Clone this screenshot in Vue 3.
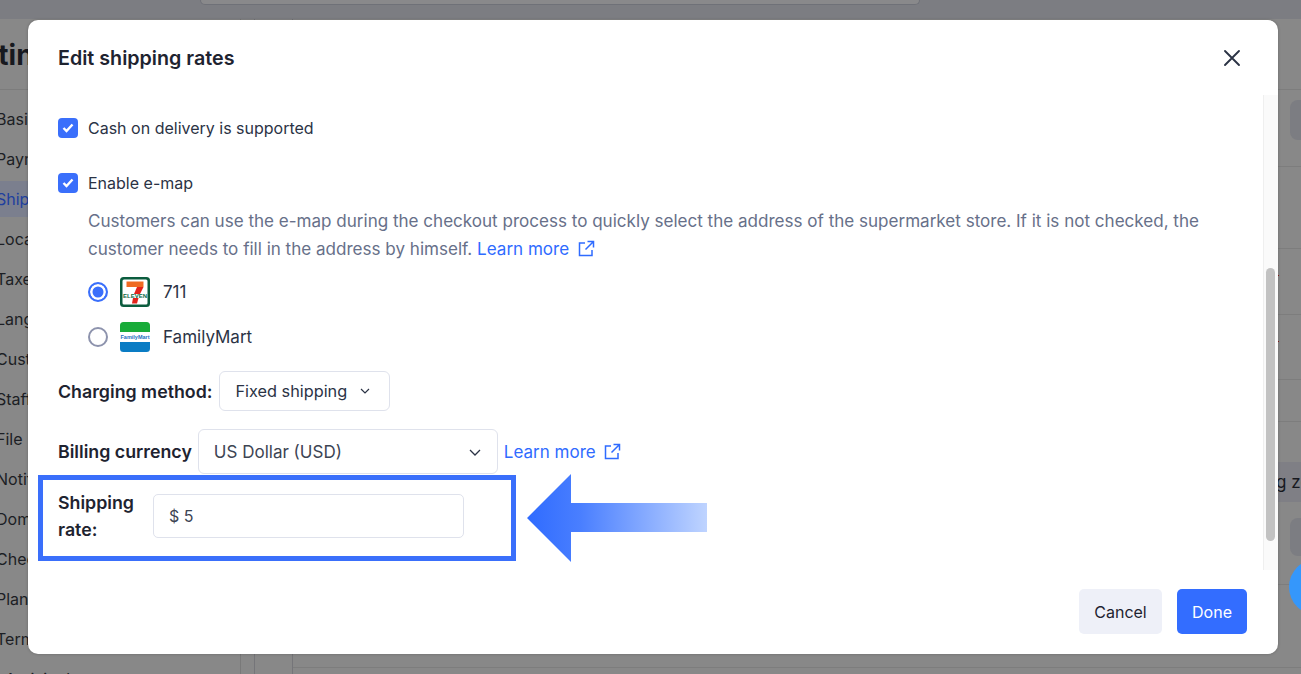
<template>
  <div class="page">
    <!-- dimmed settings page behind the dialog -->
    <div class="backdrop">
      <div class="topbar">
        <div class="search"></div>
      </div>
      <div class="content">
        <aside class="sidebar">
          <h1 class="page-title">Settings</h1>
          <ul class="menu">
            <li v-for="item in menu" :key="item" :class="{ active: item === 'Shipping', log: item === 'Activity log' }">{{ item }}</li>
          </ul>
        </aside>
        <div class="rail"></div>
        <main class="main">
          <div class="row" style="height: 71px"></div>
          <div class="row box-row" style="height: 77px"><div class="grey-box"></div></div>
          <div class="row" style="height: 82px"></div>
          <div class="row dot-row" style="height: 66px"><span class="dot"></span></div>
          <div class="row dot-row" style="height: 65px"><span class="dot"></span></div>
          <div class="row" style="height: 42px"></div>
          <div class="plain" style="height: 40px"></div>
          <div class="zone-tag">Shipping zone</div>
          <div class="row low-box" style="height: 83px"><div class="grey-box tall"></div></div>
          <div class="row" style="height: 83px"></div>
        </main>
      </div>
      <div class="chat-bubble"></div>
    </div>

    <div class="modal">
      <div class="modal-header">
        <h2>Edit shipping rates</h2>
        <button class="close">
          <svg width="20" height="20" viewBox="0 0 20 20" fill="none" stroke="#2b3345" stroke-width="1.9" stroke-linecap="round">
            <path d="M3 3l14 14M17 3L3 17" />
          </svg>
        </button>
      </div>

      <div class="modal-scroll">
        <div class="modal-body">
          <label class="check first">
            <span class="box"><svg width="12" height="10" viewBox="0 0 12 10" fill="none" stroke="#fff" stroke-width="2.4"><path d="M1.5 5l3 3 6-6.5" /></svg></span>
            Cash on delivery is supported
          </label>
          <label class="check second">
            <span class="box"><svg width="12" height="10" viewBox="0 0 12 10" fill="none" stroke="#fff" stroke-width="2.4"><path d="M1.5 5l3 3 6-6.5" /></svg></span>
            Enable e-map
          </label>
          <p class="hint">
            Customers can use the e-map during the checkout process to quickly select the address of the supermarket store. If it is not checked, the customer needs to fill in the address by himself.
            <a class="link">Learn more
              <svg class="ext" width="18" height="18" viewBox="0 0 18 18" fill="none" stroke="#2f6bff" stroke-width="1.5"><path d="M8 3H2.500v12.500h12.500V10M10.500 1.500h6v6M16 2L8.500 9.500" /></svg>
            </a>
          </p>

          <div class="radio-row top">
            <span class="radio on"></span>
            <svg class="logo" width="30" height="30" viewBox="0 0 30 30">
              <rect width="30" height="30" rx="3.500" fill="#0b5c3e" />
              <rect x="2.500" y="2.500" width="25" height="25" rx="1.500" fill="#fff" />
              <path d="M6.500 4.500h17v5.500h-17z" fill="#ef6a22" />
              <path d="M17 10h6.500l-3.500 7h-6z" fill="#e2231a" />
              <path d="M13 21h5.500l-1.500 5.500h-5z" fill="#e2231a" />
              <text x="15" y="20.700" text-anchor="middle" class="eleven">ELEVEN</text>
            </svg>
            <span>711</span>
          </div>
          <div class="radio-row">
            <span class="radio"></span>
            <svg class="logo" width="30" height="30" viewBox="0 0 30 30">
              <rect width="30" height="30" rx="3.500" fill="#fff" />
              <path d="M0 10V3.500A3.500 3.500 0 0 1 3.500 0h23A3.500 3.500 0 0 1 30 3.500V10z" fill="#18ab39" />
              <path d="M0 20h30v6.500a3.500 3.500 0 0 1-3.500 3.500h-23A3.500 3.500 0 0 1 0 26.500z" fill="#0a7cc4" />
              <text x="15" y="17" text-anchor="middle" class="fmart">FamilyMart</text>
            </svg>
            <span>FamilyMart</span>
          </div>

          <div class="field-row charging">
            <span class="field-label">Charging method:</span>
            <div class="select small">
              <span>Fixed shipping</span>
              <svg width="12" height="12" viewBox="0 0 12 12" fill="none" stroke="#2b3345" stroke-width="1.2"><path d="M2 4l4 4 4-4" /></svg>
            </div>
          </div>

          <div class="field-row billing">
            <span class="field-label">Billing currency</span>
            <div class="select wide">
              <span>US Dollar (USD)</span>
              <svg width="14" height="14" viewBox="0 0 14 14" fill="none" stroke="#2b3345" stroke-width="1.300"><path d="M2 5l5 5 5-5" /></svg>
            </div>
            <a class="link big">Learn more
              <svg class="ext" width="18" height="18" viewBox="0 0 18 18" fill="none" stroke="#2f6bff" stroke-width="1.5"><path d="M8 3H2.500v12.500h12.500V10M10.500 1.500h6v6M16 2L8.500 9.500" /></svg>
            </a>
          </div>

          <div class="rate-row">
            <div class="highlight">
              <span class="field-label rate-label">Shipping rate:</span>
              <div class="input">$ 5</div>
            </div>
            <svg class="arrow" width="180" height="88" viewBox="0 0 180 88">
              <defs>
                <linearGradient id="arrowFill" x1="0" y1="0" x2="1" y2="0">
                  <stop offset="0" stop-color="#2f6bff" />
                  <stop offset="0.3" stop-color="#4a7fff" />
                  <stop offset="1" stop-color="#bfd4ff" />
                </linearGradient>
              </defs>
              <path d="M0 44L44 0v29h136v29H44v30z" fill="url(#arrowFill)" />
            </svg>
          </div>
        </div>
        <div class="scrollbar"><div class="thumb"></div></div>
      </div>

      <div class="modal-footer">
        <button class="btn cancel">Cancel</button>
        <button class="btn done">Done</button>
      </div>
    </div>
  </div>
</template>

<script setup>
const menu = [
  'Basic', 'Payment', 'Shipping', 'Locations', 'Taxes', 'Languages', 'Custom',
  'Staff', 'File', 'Notifications', 'Domains', 'Checkout', 'Plans', 'Terms', 'Activity log'
]
</script>

<style scoped>
.page {
  position: relative;
  width: 1301px;
  height: 674px;
  overflow: hidden;
  font-family: Inter, "Liberation Sans", sans-serif;
}

.backdrop {
  height: 674px;
  background: #878787;
  display: flex;
  flex-direction: column;
}

.topbar {
  height: 19px;
  background: #7c7d82;
  flex-shrink: 0;
}

.search {
  margin-left: 200px;
  width: 718px;
  height: 4px;
  background: #89898b;
  border: 1px solid #6f7178;
  border-top: none;
  border-radius: 0 0 8px 8px;
}

.content {
  flex: 1;
  min-height: 0;
  display: flex;
  background: #888;
}

.sidebar {
  width: 241px;
  flex-shrink: 0;
  box-sizing: border-box;
  border-right: 1px solid #797979;
}

.page-title {
  margin: 0 0 0 -46px;
  height: 71px;
  padding-top: 17px;
  box-sizing: border-box;
  font-size: 28px;
  line-height: 38px;
  font-weight: 700;
  color: #17191f;
  border-bottom: 1px solid #7c7c7c;
}

.menu {
  list-style: none;
  margin: 0;
  padding: 9px 0 0;
}

.menu li {
  height: 40px;
  line-height: 40px;
  font-size: 16px;
  margin-left: -4px;
  color: #1c1e24;
}

.menu li.active {
  background: #7b7f8e;
  color: #1f3f9e;
  height: 36px;
  line-height: 36px;
  margin: 2px 0 2px 0;
  text-indent: -4px;
}

.menu li.log {
  margin-left: 5px;
}

.rail {
  width: 52px;
  flex-shrink: 0;
  box-sizing: border-box;
  border-right: 1px solid #757579;
  background: linear-gradient(#757579, #757579) 13px 0 / 1px 100% no-repeat;
}

.main {
  flex: 1;
}

.row {
  box-sizing: border-box;
  border-bottom: 1px solid #7d7d7d;
}

.box-row {
  padding: 10px 0 0 997px;
}

.low-box {
  padding: 16px 0 0 997px;
}

.dot-row {
  padding: 26px 0 0 985px;
}

.dot {
  display: block;
  width: 1px;
  height: 1px;
  background: #8c1a1a;
}

.zone-tag {
  height: 40px;
  line-height: 40px;
  padding-left: 923px;
  background: #7f7f85;
  color: #17191f;
  font-size: 17px;
  white-space: nowrap;
}

.grey-box {
  height: 40px;
  border-radius: 8px;
  background: #7c7d82;
}

.grey-box.tall {
  height: 38px;
}

.chat-bubble {
  position: absolute;
  left: 1289px;
  top: 559px;
  width: 56px;
  height: 56px;
  border-radius: 50%;
  background: #3597fb;
}

.modal {
  position: absolute;
  left: 28px;
  top: 20px;
  width: 1250px;
  height: 634px;
  background: #fff;
  border-radius: 10px;
  display: flex;
  flex-direction: column;
  box-shadow: 0 0 3px rgba(0, 0, 0, 0.25);
}

.modal-header {
  height: 75px;
  flex-shrink: 0;
  display: flex;
  align-items: center;
  justify-content: space-between;
  padding: 0 36px 0 30px;
  box-sizing: border-box;
}

.modal-header h2 {
  margin: 0;
  font-size: 19.7px;
  font-weight: 600;
  color: #1e2330;
}

.close {
  border: none;
  background: none;
  padding: 0;
  width: 20px;
  height: 20px;
}

.modal-scroll {
  height: 475px;
  flex-shrink: 0;
  display: flex;
}

.modal-body {
  flex: 1;
  padding: 0 30px;
  box-sizing: border-box;
  font-size: 16px;
  color: #2b3345;
}

.scrollbar {
  width: 15px;
  background: #fafafa;
  border-left: 1px solid #efefef;
  box-sizing: border-box;
  padding: 173px 2px 0 2px;
}

.thumb {
  width: 9px;
  height: 273px;
  background: #c2c2c2;
  border-radius: 5px;
}

.check {
  display: flex;
  align-items: center;
  gap: 10px;
  height: 24px;
  line-height: 24px;
}

.check.first {
  margin-top: 21px;
}

.check.second {
  margin-top: 31px;
}

.box {
  width: 20px;
  height: 20px;
  border-radius: 4px;
  background: #3a6ffb;
  display: flex;
  align-items: center;
  justify-content: center;
}

.hint {
  margin: 12px 0 0 30px;
  font-size: 17.06px;
  line-height: 28px;
  color: #677089;
}

.link {
  color: #2f6bff;
  white-space: nowrap;
}

.link.big {
  font-size: 17px;
}

.ext {
  vertical-align: -3px;
  margin-left: 3px;
}

.radio-row {
  display: flex;
  align-items: center;
  margin: 15px 0 0 30px;
  height: 30px;
  font-size: 17px;
}

.radio-row.top {
  margin-top: 14px;
}

.radio-row .logo {
  margin: 0 13px 0 12px;
}

.eleven {
  font-family: "Liberation Sans", sans-serif;
  font-size: 6px;
  font-weight: 700;
  fill: #0b6b45;
}

.fmart {
  font-family: "Liberation Sans", sans-serif;
  font-size: 5.500px;
  font-weight: 700;
  fill: #1c6fc0;
}

.radio {
  width: 20px;
  height: 20px;
  border-radius: 50%;
  border: 2px solid #8d93ad;
  box-sizing: border-box;
}

.radio.on {
  border: 2px solid #3a6ffb;
  background: #3a6ffb;
  box-shadow: inset 0 0 0 2.5px #fff;
}

.field-row {
  display: flex;
  align-items: center;
  gap: 6px;
}

.charging {
  margin-top: 19px;
  gap: 7px;
}

.billing {
  margin-top: 18px;
}

.field-label {
  font-size: 17.8px;
  font-weight: 600;
  color: #1e2330;
}

.select {
  display: flex;
  align-items: center;
  justify-content: space-between;
  box-sizing: border-box;
  border: 1px solid #dfe2ec;
  border-radius: 6px;
}

.select.small {
  width: 171px;
  height: 40px;
  padding: 0 18px 0 15px;
  font-size: 16.3px;
}

.select.wide {
  width: 300px;
  height: 45px;
  padding: 0 15px 0 15px;
  font-size: 17px;
  color: #3d4453;
}

.rate-row {
  display: flex;
  align-items: center;
  margin-left: -20px;
}

.highlight {
  width: 478px;
  height: 86px;
  box-sizing: border-box;
  border: 5px solid #3a6ffb;
  display: flex;
  align-items: center;
  padding: 0 0 4px 15px;
}

.rate-label {
  width: 95px;
  line-height: 27px;
}

.input {
  width: 311px;
  height: 44px;
  line-height: 42px;
  box-sizing: border-box;
  border: 1px solid #dfe2ec;
  border-radius: 5px;
  padding-left: 15px;
  color: #3d4453;
}

.arrow {
  margin-left: 11px;
}

.modal-footer {
  flex: 1;
  display: flex;
  justify-content: flex-end;
  align-items: flex-start;
  gap: 15px;
  padding: 19px 31px 0 0;
}

.btn {
  height: 45px;
  border: none;
  border-radius: 5px;
  font-family: inherit;
  font-size: 16px;
}

.cancel {
  width: 83px;
  background: #eef0f8;
  color: #1e2330;
}

.done {
  width: 70px;
  background: #336dff;
  color: #fff;
}
</style>
